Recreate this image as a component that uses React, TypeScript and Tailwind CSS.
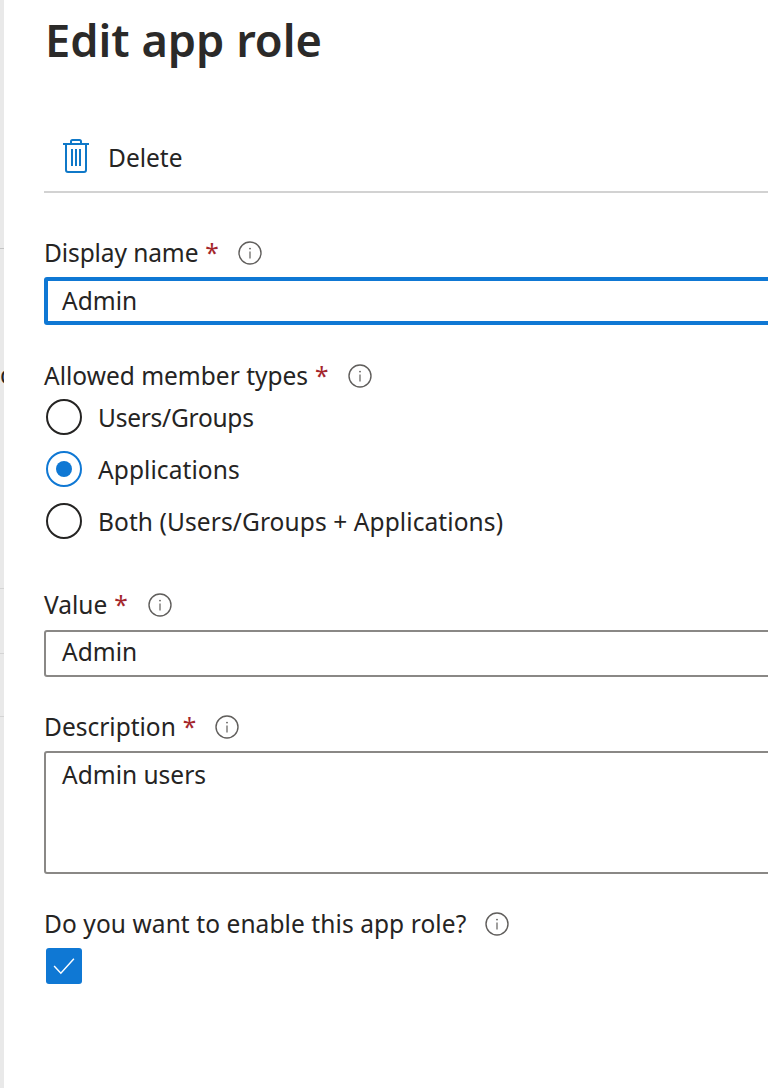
import type { ReactNode } from "react";

const font = { fontFamily: '"Noto Sans", "Open Sans", sans-serif' };

function InfoIcon() {
  return (
    <svg width="24" height="24" viewBox="0 0 24 24" fill="none" className="shrink-0">
      <circle cx="12" cy="12" r="11" stroke="#605e5c" strokeWidth="1.4" />
      <circle cx="12" cy="7.6" r="0.9" fill="#605e5c" />
      <path d="M12 10.5v7" stroke="#605e5c" strokeWidth="1.2" />
    </svg>
  );
}

function TrashIcon() {
  return (
    <svg width="28" height="34" viewBox="0 0 28 34" fill="none" stroke="#0f78c8" strokeWidth="2">
      <path d="M1 5h26" />
      <path d="M9 5V2.5Q9 1 10.5 1h7Q19 1 19 2.5V5" />
      <path d="M4 5v26q0 2 2 2h16q2 0 2-2V5" />
      <path d="M10 10v17M14 10v17M18 10v17" />
    </svg>
  );
}

function FieldLabel({
  text,
  gap,
  required = true,
  tracking = "",
}: {
  text: string;
  gap: string;
  required?: boolean;
  tracking?: string;
}) {
  return (
    <div className="flex h-[34px] items-center text-[24.5px] text-[#252423]">
      <span className={tracking}>{text}</span>
      {required ? <span className="ml-[7px] text-[#a4262c]">*</span> : null}
      <span className={gap}>
        <InfoIcon />
      </span>
    </div>
  );
}

function Radio({ label, checked = false, tracking = "" }: { label: string; checked?: boolean; tracking?: string }) {
  return (
    <div className="flex h-[52px] items-center">
      <span
        className={`ml-[2px] flex h-[36px] w-[36px] items-center justify-center rounded-full border-2 ${
          checked ? "border-[#0f78d4]" : "border-[#252423]"
        }`}
      >
        {checked ? <span className="h-[16px] w-[16px] rounded-full bg-[#0f78d4]" /> : null}
      </span>
      <span className={`ml-[16px] mt-[2px] text-[24.5px] text-[#252423] ${tracking}`}>{label}</span>
    </div>
  );
}

function Box({ children, className }: { children: ReactNode; className: string }) {
  return <div className={`-mr-[8px] rounded-[3px] bg-white pl-[16px] text-[24.5px] text-[#252423] ${className}`}>{children}</div>;
}

export default function App() {
  return (
    <div className="flex h-[1088px] w-[768px] overflow-hidden bg-white" style={font}>
      <div className="flex w-[4px] shrink-0 flex-col overflow-hidden bg-[#e9e9e9]">
        <div className="mt-[248px] h-[1px] shrink-0 bg-[#c4c4c4]" />
        <div className="mt-[109px] h-[34px] shrink-0 text-[24.5px] leading-[34px] text-[#252423]">c</div>
        <div className="mt-[196px] h-[1px] shrink-0 bg-[#d4d4d4]" />
        <div className="mt-[64px] h-[1px] shrink-0 bg-[#d4d4d4]" />
        <div className="mt-[62px] h-[1px] shrink-0 bg-[#d4d4d4]" />
      </div>

      <main className="min-w-0 flex-1 pl-[40px]">
        <h1 className="ml-[1px] mt-[6px] h-[68px] text-[45.2px] font-semibold leading-[68px] text-[#2b2a29]">Edit app role</h1>

        <div className="mt-[50px] flex h-[69px] items-start border-b-2 border-[#d2d2d2]">
          <span className="ml-[18px] mt-[15px] flex">
            <TrashIcon />
          </span>
          <span className="ml-[18px] mt-[16px] text-[24.5px] text-[#252423]">Delete</span>
        </div>

        <div className="mt-[43px]">
          <FieldLabel text="Display name" gap="ml-[19px]" tracking="tracking-[-0.1px]" />
        </div>
        <Box className="mt-[7px] flex h-[48px] items-center border-[4px] border-[#0f78d4] !pl-[14px]">Admin</Box>

        <div className="mt-[34px]">
          <FieldLabel text="Allowed member types" gap="ml-[19px]" />
        </div>
        <div className="mt-[-2px]">
          <Radio label="Users/Groups" tracking="tracking-[-0.25px]" />
          <Radio label="Applications" tracking="tracking-[0.08px]" checked />
          <Radio label="Both (Users/Groups + Applications)" tracking="tracking-[0.09px]" />
        </div>

        <div className="mt-[41px]">
          <FieldLabel text="Value" gap="ml-[20px]" />
        </div>
        <Box className="mt-[8px] flex h-[47px] items-center border-2 border-[#8a8886] !pl-[16px] pb-[2px]">Admin</Box>

        <div className="mt-[33px]">
          <FieldLabel text="Description" gap="ml-[19px]" />
        </div>
        <Box className="mt-[7px] h-[123px] border-2 border-[#8a8886] pt-[4px]">Admin users</Box>

        <div className="mt-[33px]">
          <FieldLabel text="Do you want to enable this app role?" gap="ml-[19px]" required={false} tracking="tracking-[0.08px]" />
        </div>
        <div className="ml-[2px] mt-[7px] flex h-[36px] w-[36px] items-center justify-center rounded-[3px] bg-[#0f78d4]">
          <svg width="22" height="18" viewBox="0 0 24 20" fill="none" stroke="white" strokeWidth="1.6">
            <path d="M1 10l7.5 8L23 2" />
          </svg>
        </div>
      </main>
    </div>
  );
}
